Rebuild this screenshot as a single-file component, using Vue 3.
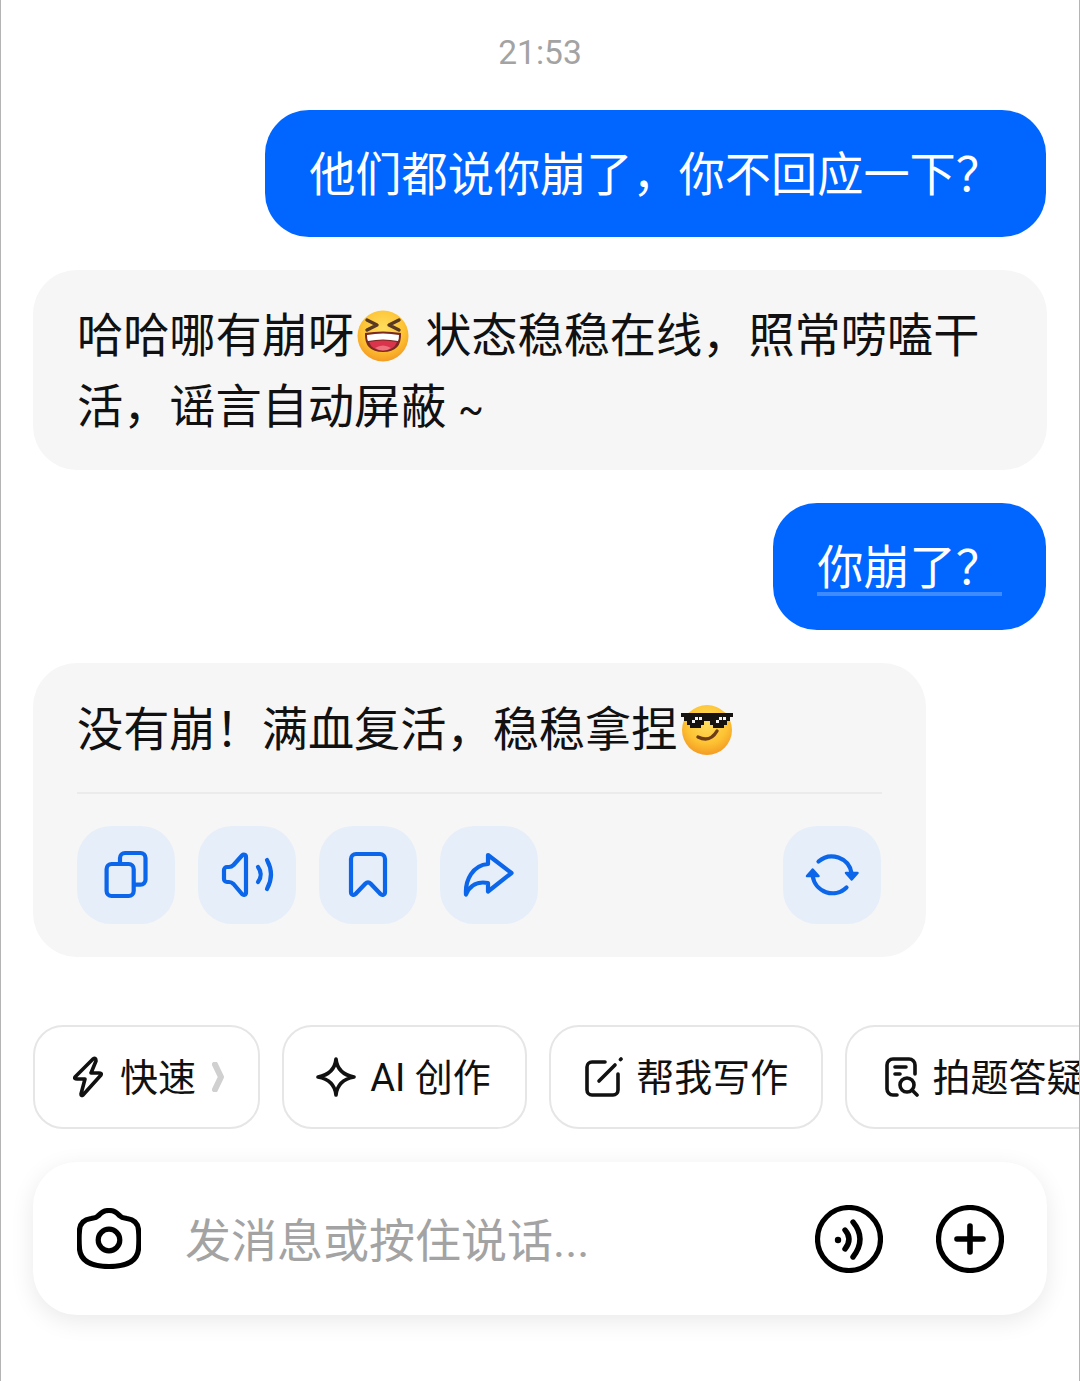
<template>
  <div class="chat-page">
    <div class="time">21:53</div>

    <div class="messages">
      <div class="bubble user">他们都说你崩了，你不回应一下？</div>

      <div class="bubble bot">
        哈哈哪有崩呀<svg class="emoji emoji-laugh" viewBox="0 0 54 54">
          <defs>
            <radialGradient id="faceA" cx="50%" cy="35%" r="70%">
              <stop offset="0" stop-color="#ffdf5e" />
              <stop offset="0.6" stop-color="#fdc233" />
              <stop offset="1" stop-color="#f2931f" />
            </radialGradient>
          </defs>
          <circle cx="27" cy="27" r="25.5" fill="url(#faceA)" />
          <path d="M11 11 L21 16 L11 21 M43 11 L33 16 L43 21" fill="none" stroke="#5a3a22" stroke-width="3.4" stroke-linecap="round" stroke-linejoin="round" />
          <path d="M9 24 Q27 21 45 24 Q46 43 27 43 Q8 43 9 24Z" fill="#7a2a22" />
          <path d="M11 26 Q27 23 43 26 Q43 30 42 32 Q27 29 12 32 Q11 30 11 26Z" fill="#fff" />
          <path d="M13 33 Q27 30 41 33 Q38 41.5 27 41.5 Q16 41.5 13 33Z" fill="#d9344c" />
          <path d="M19 39 Q27 34 35 39 Q31 41.5 27 41.5 Q23 41.5 19 39Z" fill="#f0717e" />
        </svg><span class="after-emoji">状态稳稳在线，照常唠嗑干活，谣言自动屏蔽 <span class="tilde">~</span></span>
      </div>

      <div class="bubble user"><span class="linked">你崩了？</span></div>

      <div class="bubble bot last">
        <div class="last-text">
          没有崩！满血复活，稳稳拿捏<svg class="emoji emoji-cool" viewBox="0 0 54 54">
            <defs>
              <radialGradient id="faceB" cx="50%" cy="35%" r="70%">
                <stop offset="0" stop-color="#ffdf5e" />
                <stop offset="0.6" stop-color="#fdc233" />
                <stop offset="1" stop-color="#f2931f" />
              </radialGradient>
            </defs>
            <circle cx="27" cy="28" r="25" fill="url(#faceB)" />
            <path d="M1 11 H53 V15 H50 V19 H47 V23 H44 V26 H33 V23 H30 V19 H24 V23 H21 V26 H10 V23 H7 V19 H4 V15 H1Z" fill="#16120f" />
            <path d="M12 18 h3 v-3 h3 v3 h-3 v3 h-3z M19 15 h3 v3 h-3z M36 18 h3 v-3 h3 v3 h-3 v3 h-3z M43 15 h3 v3 h-3z" fill="#f4f4f4" />
            <path d="M18 35 Q30 41 37 29" fill="none" stroke="#6e3d17" stroke-width="3.4" stroke-linecap="round" />
          </svg>
        </div>
        <div class="divider"></div>
        <div class="actions">
          <button v-for="item in actions" :key="item.name" class="action" :class="{ push: item.push }">
            <svg viewBox="0 0 98 98" width="98" height="98" fill="none" stroke="#0b66ea" stroke-width="4.2" stroke-linecap="round" stroke-linejoin="round">
              <path v-for="d in item.paths" :key="d" :d="d" />
              <path v-if="item.solid" :d="item.solid" fill="#0b66ea" stroke-width="2.5" />
            </svg>
          </button>
        </div>
      </div>
    </div>

    <div class="chips">
      <div class="chip chip-fast">
        <svg width="32" height="42" viewBox="0 0 32 42" class="line-icon">
          <path d="M21 3 L3 21 Q2 23 5 23 H13 L9 38 Q9 40.5 11 39 L29 19 Q30 17 27 17 H19 L24 5 Q24 1 21 3Z" />
        </svg>
        <span>快速</span>
        <svg class="chevron" width="12" height="30" viewBox="0 0 12 30">
          <path d="M3 2.5 L9 15 L3 27.5" />
        </svg>
      </div>
      <div class="chip chip-ai">
        <svg width="40" height="40" viewBox="0 0 40 40" class="line-icon">
          <path d="M20 2 C21 12 27 18 38 20 C27 22 21 28 20 38 C19 28 13 22 2 20 C13 18 19 12 20 2Z" />
        </svg>
        <span>AI 创作</span>
      </div>
      <div class="chip chip-write">
        <svg width="38" height="40" viewBox="0 0 38 40" class="line-icon">
          <path d="M20 5 H7 A5 5 0 0 0 2 10 V33 A5 5 0 0 0 7 38 H28 A5 5 0 0 0 33 33 V17" />
          <path d="M14 24 L30 8" />
          <path d="M35.500 2.500 L36 2" />
        </svg>
        <span>帮我写作</span>
      </div>
      <div class="chip chip-photo">
        <svg width="34" height="40" viewBox="0 0 34 40" class="line-icon">
          <path d="M12 38 H8 A6 6 0 0 1 2 32 V8 A6 6 0 0 1 8 2 H24 A6 6 0 0 1 30 8 V17" />
          <path d="M10 10 H21 M10 17 H15" />
          <circle cx="22" cy="28" r="7" />
          <path d="M27 33 L32 38" />
        </svg>
        <span>拍题答疑</span>
      </div>
    </div>

    <div class="input-bar">
      <svg class="camera" width="64" height="61" viewBox="0 0 64 61" fill="none" stroke="#000" stroke-width="5.2">
        <path d="M32 2.500 C26 2.500 24 5 21 8 C19 10 17 10 14 10.500 C7 11.500 3 15 2.500 22 C2 27 2 35 2.500 41 C3.500 52 12 58.500 32 58.500 C52 58.500 60.500 52 61.500 41 C62 35 62 27 61.500 22 C61 15 57 11.500 50 10.500 C47 10 45 10 43 8 C40 5 38 2.500 32 2.500Z" />
        <circle cx="32" cy="32" r="10.800" />
      </svg>
      <div class="placeholder">发消息或按住说话...</div>
      <svg class="round-icon" width="68" height="68" viewBox="0 0 68 68" fill="none" stroke="#000" stroke-width="5.2" stroke-linecap="round">
        <circle cx="34" cy="34" r="31.500" />
        <circle cx="23" cy="35" r="3.200" fill="#000" stroke="none" />
        <path d="M30 25 Q38 34 30 44" stroke-width="5.400" />
        <path d="M38 17 Q52 34 38 52" stroke-width="5.400" />
      </svg>
      <svg width="68" height="68" viewBox="0 0 68 68" fill="none" stroke="#000" stroke-width="5.2" stroke-linecap="round">
        <circle cx="34" cy="34" r="31.500" />
        <path d="M21 34 H47 M34 21 V47" stroke-width="5.600" />
      </svg>
    </div>
  </div>
</template>

<script setup>
const actions = [
  {
    name: 'copy',
    paths: [
      'M34.600 38 H51.700 A5 5 0 0 1 56.700 43 V65 A5 5 0 0 1 51.700 70 H34.600 A5 5 0 0 1 29.600 65 V43 A5 5 0 0 1 34.600 38Z',
      'M43 38 V32 A5 5 0 0 1 48 27 H63.500 A5 5 0 0 1 68.500 32 V53.700 A5 5 0 0 1 63.500 58.700 H57'
    ]
  },
  {
    name: 'speak',
    paths: [
      'M48 31 V66.500 C48 69 45.500 69.500 44 68 L35.500 58 C34.500 57 33 56 31 56 H29 A3 3 0 0 1 26 53 V44 A3 3 0 0 1 29 41 H31 C33 41 34.500 40 35.500 39 L44 29.500 C45.500 28 48 28.500 48 31Z',
      'M60 41 Q65.500 48.500 60 56',
      'M69 34 Q77 48.500 69 63'
    ]
  },
  {
    name: 'save',
    paths: [
      'M32 33 A5 5 0 0 1 37 28 H61 A5 5 0 0 1 66 33 V66 C66 69 63 69.500 61.500 68 L51.500 57.500 C50 56 48 56 46.500 57.500 L36.500 68 C35 69.500 32 69 32 66Z'
    ]
  },
  {
    name: 'share',
    paths: [
      'M48 29 L71.500 47 L48 65.500 V57 C38 55 30 59 26 68.500 C25 54 33 39 48 38Z'
    ]
  },
  {
    name: 'refresh',
    push: true,
    paths: [
      'M35.500 35.500 A20 20 0 0 1 68.500 47',
      'M63.500 61.500 A20 20 0 0 1 29.700 50'
    ],
    solid: 'M63 47 H74.500 L68.700 53.500Z M24 50 H35.500 L29.700 43.500Z'
  }
]
</script>

<style>
html, body { margin: 0; background: #fff; }
</style>

<style scoped>
.chat-page {
  box-sizing: border-box;
  width: 1080px;
  height: 1381px;
  padding: 31px 32px 0;
  border-left: 1px solid #b4b4b4;
  border-right: 1px solid #b4b4b4;
  overflow: hidden;
  background: #fff;
  font-family: Roboto, "Noto Sans CJK SC", sans-serif;
  color: #111;
}
.time { text-align: center; font-size: 33.5px; line-height: 44px; color: #a3a3a3; margin-bottom: 35px; }

.messages { display: flex; flex-direction: column; gap: 33px; }
.bubble { padding: 31px 44px 27px; border-radius: 44px; font-size: 46.2px; line-height: 71px; }
.bubble.user { align-self: flex-end; margin-right: 1px; padding: 30px 44px 26px; background: #0066ff; color: #fff; }
.bubble.bot { background: #f6f6f6; }
.bubble.last { width: 893px; box-sizing: border-box; padding: 32px 44px 33px; }
.linked {
  display: inline-block;
  background: linear-gradient(#3d8bff, #3d8bff) no-repeat 0 59px / 100% 4px;
}
.tilde { font-size: 38px; line-height: 0; }
.emoji { width: 54px; height: 54px; vertical-align: -11px; margin-left: 2px; }
.after-emoji { margin-left: 15px; }
.emoji-cool { margin-left: 3px; vertical-align: -10px; }

.divider { height: 2px; background: #ebebeb; margin: 26px 0 32px; }
.actions { display: flex; gap: 23px; }
.action {
  width: 98px;
  height: 98px;
  padding: 0;
  border: none;
  border-radius: 34px;
  background: #e6eef9;
  cursor: pointer;
}
.action svg { display: block; }
.action.push { margin-left: auto; margin-right: 1px; }

.chips { display: flex; gap: 22.3px; margin-top: 68px; }
.chip {
  flex-shrink: 0;
  box-sizing: border-box;
  height: 104px;
  display: flex;
  align-items: center;
  border: 2px solid #e6e6e6;
  border-radius: 30px;
  font-size: 38px;
  white-space: nowrap;
}
.chip span { margin-top: -5px; }
.line-icon { fill: none; stroke: #111; stroke-width: 3.6; stroke-linecap: round; stroke-linejoin: round; flex-shrink: 0; }
.chevron { fill: none; stroke: #d0d0d0; stroke-width: 6; stroke-linecap: round; stroke-linejoin: round; }
.chip-fast { padding: 0 34px 0 37px; gap: 16px; }
.chip-ai { padding: 0 34px 0 32px; gap: 14px; }
.chip-write { padding: 0 33px 0 34px; gap: 13px; }
.chip-photo { padding: 0 32px 0 38px; gap: 13px; }

.input-bar {
  display: flex;
  align-items: center;
  box-sizing: border-box;
  height: 153px;
  margin-top: 33px;
  padding: 0 43px 0 44px;
  border-radius: 44px;
  background: #fff;
  box-shadow: 0 6px 24px rgba(0, 0, 0, 0.09);
}
.camera { flex-shrink: 0; }
.placeholder { flex: 1; margin: 0 0 4px 44px; font-size: 46px; color: #a3a3a3; }
.round-icon { margin-right: 53px; }
</style>
